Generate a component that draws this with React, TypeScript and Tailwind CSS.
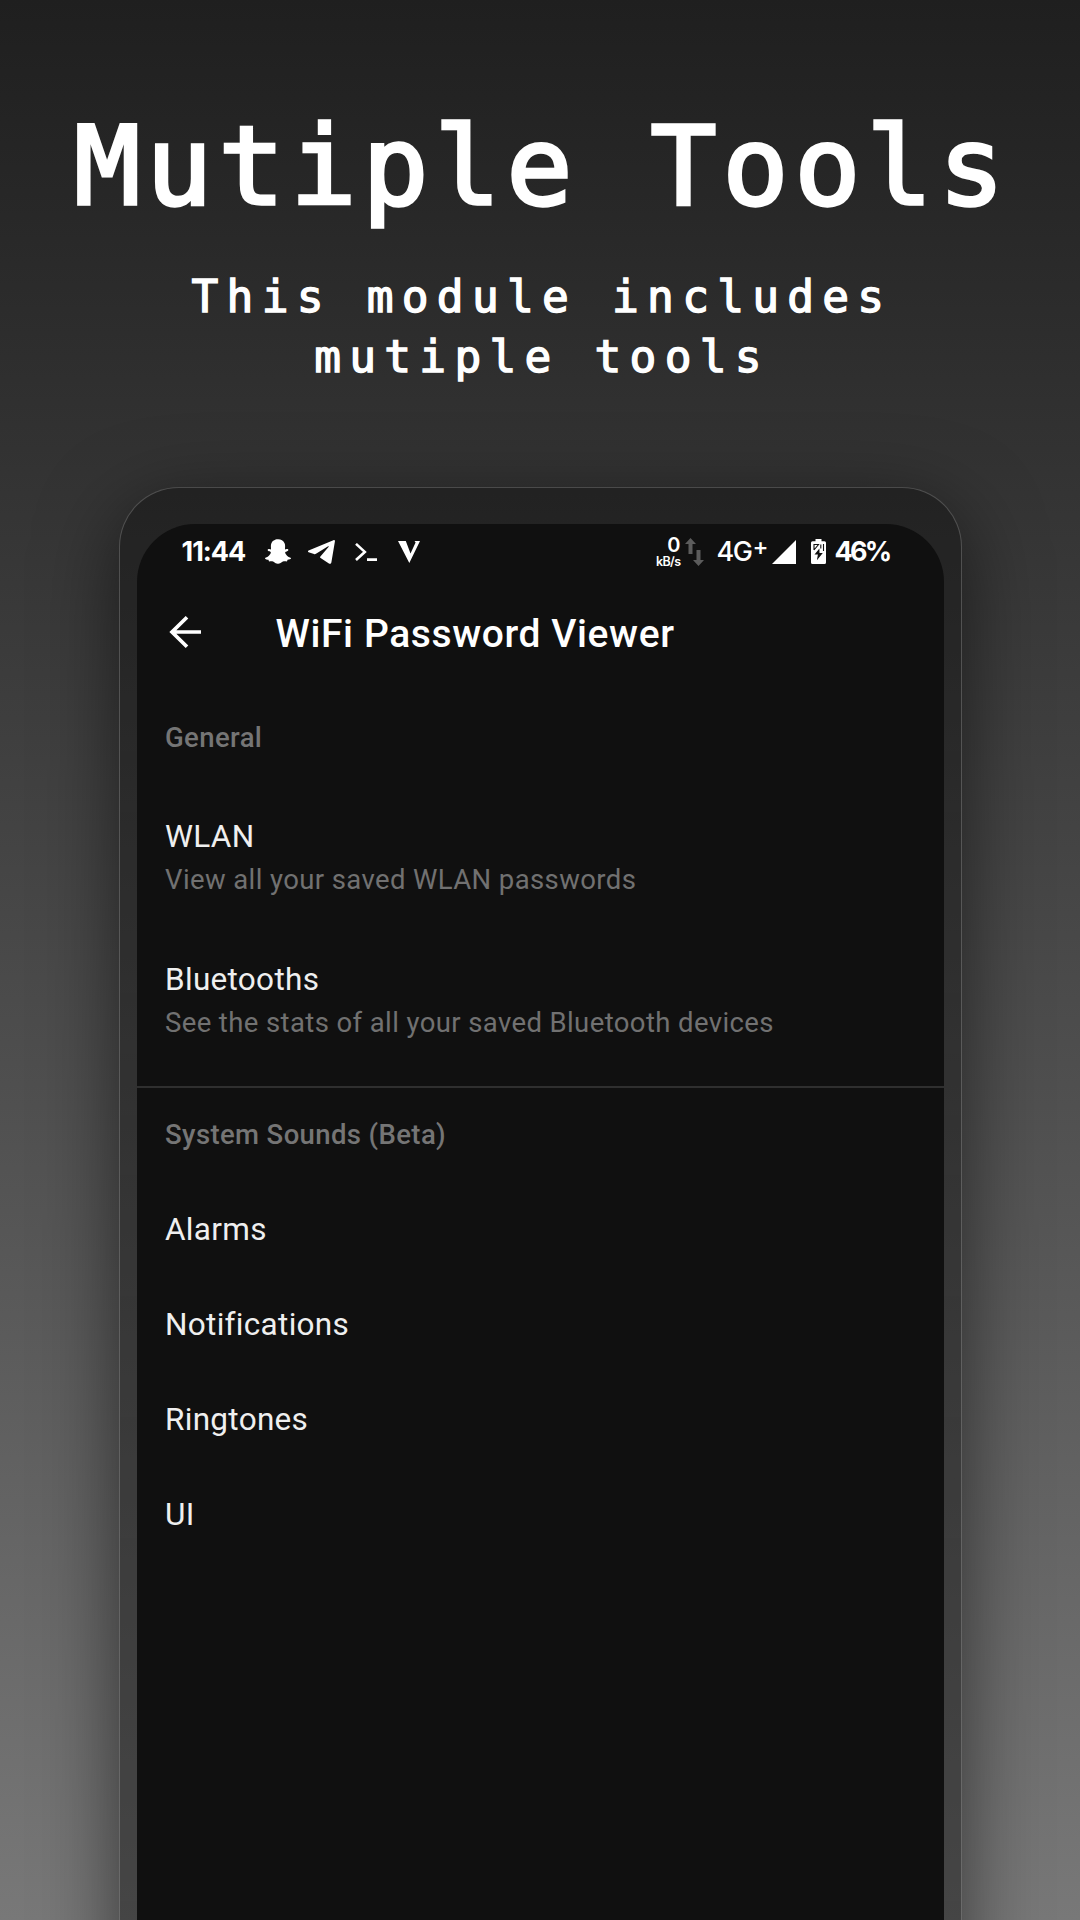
import React from "react";
import { FaSnapchatGhost } from "react-icons/fa";

function Row({ title, sub }: { title: string; sub: string }) {
  return (
    <div className="h-[143px] pt-[34px] pl-[28.5px]">
      <div className="text-[31.5px] leading-[40px] tracking-[0.3px] text-[#efefef]">{title}</div>
      <div className="mt-[4px] text-[27.5px] leading-[38px] tracking-[0.39px] text-[#717171]">{sub}</div>
    </div>
  );
}

function Heading({ children }: { children: React.ReactNode }) {
  return <h3 className="pl-[28.5px] text-[27.5px] leading-[40px] font-medium tracking-[0.38px] text-[#757575]">{children}</h3>;
}

function StatusBar() {
  return (
    <div className="flex h-[55px] items-center pl-[45px] font-['Inter',sans-serif] whitespace-nowrap text-white">
      <div className="w-[83px] text-[27px] leading-[30px] font-bold tracking-[-1px]">11:44</div>
      <FaSnapchatGhost className="h-[27px] w-[26px]" />
      <svg className="ml-[17px] h-[24px] w-[27px]" viewBox="0 0 27 24" fill="currentColor">
        <path d="M.6 10.4 25.4.2c1-.4 1.7.2 1.5 1.4l-3.5 20.6c-.3 1.5-1.3 2-2.5 1.3l-8.3-5.5c-.7-.5-.7-1 0-1.7L20.5 7c.6-.6 0-.9-.8-.4L8 13.8c-.7.4-1.3.5-2 .2L.6 12.2c-.9-.3-.8-1.3 0-1.8Z" />
      </svg>
      <svg className="ml-[20px] h-[18px] w-[22px]" viewBox="0 0 22 18" fill="none" stroke="currentColor" strokeWidth="2.6">
        <path d="M1 .9 9.8 8.9 1 17M12 16.6h10" />
      </svg>
      <svg className="ml-[21px] h-[22px] w-[22px]" viewBox="0 0 22 22" fill="currentColor">
        <path d="M0 0h7.8l4.7 12.6L17.6 1.5 16.5 0H22L11.3 22Z" />
      </svg>

      <div className="ml-[238px] flex h-[30px] w-[23px] flex-col items-end">
        <div className="text-[20px] leading-[17px] font-semibold">0</div>
        <div className="mt-[1px] text-[12.5px] leading-[13px] font-semibold tracking-[-0.6px]">kB/s</div>
      </div>
      <svg className="ml-[4px] h-[28px] w-[19px]" viewBox="0 0 19 28" fill="#5c5c5c">
        <path d="M5.5 0 11 6H7.5v10h-4V6H0ZM13.5 28 19 22h-3.500V12h-4v10H8Z" />
      </svg>
      <div className="ml-[13px] flex h-[30px] w-[51px] text-[27px] leading-[30px] font-medium tracking-[-1.4px]">
        4G<span className="-mt-[5px] ml-[1px] text-[24px]">+</span>
      </div>
      <svg className="ml-[4px] h-[24px] w-[24px]" viewBox="0 0 24 24" fill="currentColor">
        <path d="M24 0v24H0Z" />
      </svg>
      <svg className="ml-[15px] h-[25px] w-[15px]" viewBox="0 0 15 25">
        <path d="M4.500 0h6v2.300H13.500q1.500 0 1.500 1.500V23.500q0 1.500-1.500 1.500h-12Q0 25 0 23.500V3.800q0-1.500 1.500-1.500h3Z" fill="white" />
        <path d="M8.400 9.500 3.500 15.500h3.400l-1 5.800L11.800 14H8.500Z" fill="#101010" />
        <path d="M3 11V5.500h4.500L3 11M9.800 5.500v4M12.500 5v7" fill="none" stroke="#101010" strokeWidth="1.1" />
      </svg>
      <div className="ml-[9px] text-[27px] leading-[30px] font-bold tracking-[-2.8px]">46%</div>
    </div>
  );
}

export default function App() {
  return (
    <div className="flex h-[1920px] w-[1080px] flex-col overflow-hidden bg-linear-to-b from-[#1f1f1f] to-[#787878] text-white">
      <h1 className="mt-[101px] pl-[5px] text-center font-['DejaVu_Sans_Mono',monospace] text-[109.5px] leading-[130px] tracking-[6.1px] [-webkit-text-stroke:3.4px_white]">
        Mutiple Tools
      </h1>
      <p className="mt-[36px] pl-[4px] text-center font-['DejaVu_Sans_Mono',monospace] text-[44.5px] leading-[60px] tracking-[8.25px] [-webkit-text-stroke:1.4px_white]">
        This module includes
        <br />
        mutiple tools
      </p>
      <div className="mt-[100px] h-[1700px] w-[843px] shrink-0 self-center rounded-t-[60px] border border-white/20 bg-linear-to-b from-black/33 to-black/44 px-[17px] pt-[36px] font-['Roboto',sans-serif] shadow-[0_20px_80px_rgba(0,0,0,0.55)]">
        <div className="h-full rounded-t-[58px] bg-[#101010]">
          <StatusBar />
          <header className="flex h-[110px] items-center pl-[32px]">
            <svg className="-mt-[5px] h-[32px] w-[32px]" viewBox="0 0 32 32" fill="none" stroke="white" strokeWidth="3.7">
              <path d="M32 16H3M18 1.3 3 16l15 14.7" />
            </svg>
            <h2 className="ml-[75px] text-[39px] leading-[48px] font-medium tracking-[0.6px]">WiFi Password Viewer</h2>
          </header>
          <div className="pt-[29px]">
            <Heading>General</Heading>
            <div className="mt-[25px]">
              <Row title="WLAN" sub="View all your saved WLAN passwords" />
              <Row title="Bluetooths" sub="See the stats of all your saved Bluetooth devices" />
            </div>
          </div>
          <div className="mt-[17px] h-[2px] bg-[#2f2f2f]" />
          <div className="pt-[27px]">
            <Heading>System Sounds (Beta)</Heading>
            <div className="mt-[27px]">
              {["Alarms", "Notifications", "Ringtones", "UI"].map((name) => (
                <div key={name} className="h-[95px] pt-7 pl-[28.5px] text-[31.5px] leading-[40px] tracking-[0.3px] text-[#efefef]">
                  {name}
                </div>
              ))}
            </div>
          </div>
        </div>
      </div>
    </div>
  );
}
